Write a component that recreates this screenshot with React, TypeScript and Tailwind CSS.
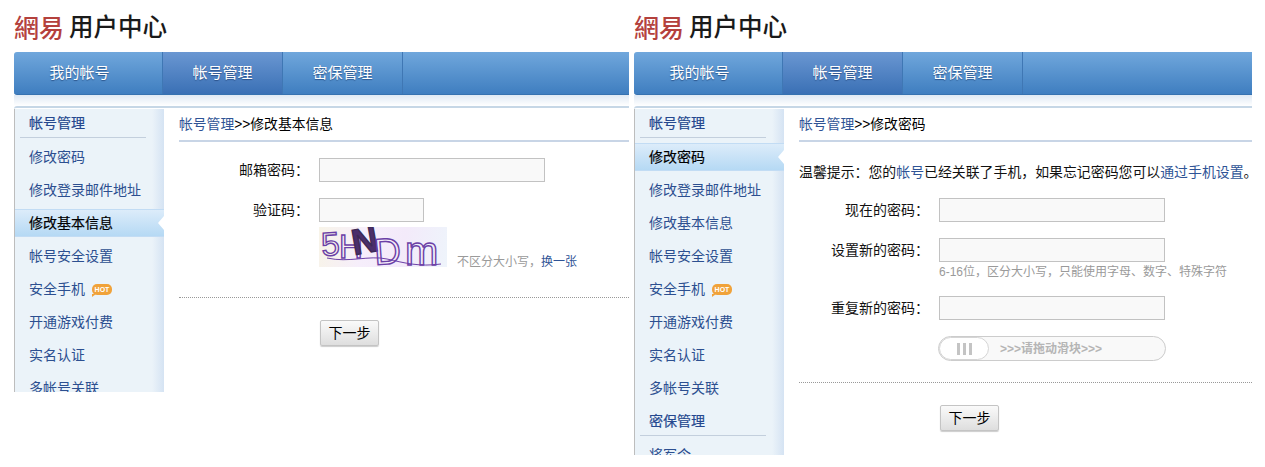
import React from "react";

const CJK = "font-['Liberation_Sans','Noto_Sans_CJK_SC',sans-serif]";

function Tab({ label, active, className }: { label: string; active?: boolean; className: string }) {
  return (
    <div
      className={`flex h-full items-center justify-center border-r border-[#3f77b4] text-[15px] text-white [text-shadow:0_1px_1px_rgba(20,50,100,0.6)] ${className} ${
        active ? "bg-[linear-gradient(#6a97d2,#3a70b5)]" : ""
      }`}
    >
      {label}
    </div>
  );
}

function SectionHead({ label, first }: { label: string; first?: boolean }) {
  return (
    <div
      className={`relative shrink-0 pl-[14px] text-[14px] leading-[20px] text-[#25488f] [-webkit-text-stroke:0.2px_#25488f] ${
        first ? "h-[32px] pt-[4px]" : "h-[34px] pt-[6px]"
      }`}
    >
      {label}
      <div className="absolute bottom-[3px] left-[5px] h-px w-[126px] bg-[#c3cfdd]" />
    </div>
  );
}

function NavItem({ label, active, hot }: { label: string; active?: boolean; hot?: boolean }) {
  return (
    <div className="h-[33px] shrink-0 pt-[2px]">
      <div
        className={`relative flex h-[28px] items-center pl-[14px] text-[14px] ${
          active
            ? "border-y border-[#c2dcf4] bg-[linear-gradient(#dcecfa,#b5d9f4)] text-black [-webkit-text-stroke:0.2px_#000]"
            : "text-[#2c4f90]"
        }`}
      >
        {label}
        {hot && (
          <span className="relative ml-[7px] flex h-[11px] w-[20px] items-center justify-center rounded-[5px] bg-[#f0a23a] text-[7px] font-bold leading-none text-white">
            HOT
            <span className="absolute -bottom-[2px] left-0 border-r-[4px] border-t-[3px] border-r-transparent border-t-[#f0a23a]" />
          </span>
        )}
        {active && (
          <span className="absolute right-0 top-1/2 -translate-y-1/2 border-y-[7px] border-r-[6px] border-y-transparent border-r-white" />
        )}
      </div>
    </div>
  );
}

function Sidebar({ current }: { current: string }) {
  const items = ["修改密码", "修改登录邮件地址", "修改基本信息", "帐号安全设置", "安全手机", "开通游戏付费", "实名认证", "多帐号关联"];
  return (
    <div className="flex w-[150px] shrink-0 flex-col border-l border-[#bdbdbd] bg-[linear-gradient(90deg,#ebf3f9_92%,#d5e3f3)]">
      <SectionHead label="帐号管理" first />
      {items.map((i) => (
        <NavItem key={i} label={i} active={i === current} hot={i === "安全手机"} />
      ))}
      <SectionHead label="密保管理" />
      <NavItem label="将军令" />
    </div>
  );
}

function Field({ label, width, className = "" }: { label: string; width: string; className?: string }) {
  return (
    <div className={`flex h-[24px] items-center ${className}`}>
      <div className="w-[130px] shrink-0 text-right text-[14px] text-[#111]">{label}</div>
      <div className={`ml-[10px] h-[24px] border border-[#c2c2c2] bg-[#f9f9f9] ${width}`} />
    </div>
  );
}

function NextButton() {
  return (
    <div className="ml-[141px] mt-[22px] flex h-[26px] w-[59px] items-center justify-center rounded-[2px] border border-[#c4c4c4] bg-[linear-gradient(#fafafa,#dedede)] text-[14px] text-black shadow-[0_1px_1px_rgba(0,0,0,0.2)]">
      下一步
    </div>
  );
}

function Captcha() {
  return (
    <div className="ml-[140px] mt-[5px] flex h-[40px] items-start">
      <svg width="128" height="40" viewBox="0 0 128 40" className="block shrink-0 bg-[linear-gradient(100deg,#f8f4e8,#f6eefb_35%,#f3eafa_65%,#eef4fb)]">
        <text
          x="3 20 35 56 86"
          y="29 31 28 38 38"
          rotate="-4 0 -10 -4 0"
          fontFamily="Liberation Sans"
          fontSize="33"
          fill="none"
          stroke="#6b3fa6"
          strokeWidth="1.4"
        >
          5H<tspan fill="#4b2f6b" stroke="#3d2a55" fontWeight="700" fontSize="36">N</tspan><tspan fontSize="37">D</tspan><tspan fontSize="40">m</tspan>
        </text>
        <path d="M8 31 C30 36 50 28 68 32 S100 40 122 37" fill="none" stroke="#6b3fa6" strokeWidth="1" />
      </svg>
      <span className="ml-[10px] mt-[26px] whitespace-nowrap text-[12px] leading-[18px] text-[#9a9a9a]">
        不区分大小写，<span className="text-[#2f5496]">换一张</span>
      </span>
    </div>
  );
}

function Panel({ height, width, current, crumb, children }: { height: string; width: string; current: string; crumb: string; children: React.ReactNode }) {
  return (
    <div className={`flex shrink-0 flex-col overflow-hidden ${height} ${width}`}>
      <div className="flex h-[52px] shrink-0 items-center pt-[1px]">
        <span className="font-['Noto_Sans_CJK_TC',sans-serif] text-[25px] font-medium leading-none text-[#b4413d]">網易</span>
        <span className="ml-[5px] font-['Noto_Sans_CJK_SC',sans-serif] text-[24.5px] font-medium leading-none text-[#1a1a1a]">用户中心</span>
      </div>
      <div className="flex h-[43px] shrink-0 overflow-hidden rounded-l-[3px] border-b border-[#3672b0] bg-[linear-gradient(#70a7dc,#3f7ec0)]">
        <Tab label="我的帐号" className="w-[149px] pr-[17px]" />
        <Tab label="帐号管理" active className="w-[120px]" />
        <Tab label="密保管理" className="w-[120px]" />
      </div>
      <div className="h-[11px] shrink-0 bg-[linear-gradient(#dfe9f4,#ffffff)]" />
      <div className="flex min-h-0 flex-1 rounded-tl-[3px] border-t-2 border-[#c6d7e6]">
        <div className="flex flex-col pt-px">
          <Sidebar current={current} />
        </div>
        <div className="min-w-0 flex-1 pl-[15px]">
          <div className="flex h-[34px] items-center border-b-2 border-[#c8d5e6] pt-[2px] text-[13.8px] text-black">
            <span className="text-[#2f5496]">帐号管理</span>&gt;&gt;{crumb}
          </div>
          {children}
        </div>
      </div>
    </div>
  );
}

export default function App() {
  return (
    <div className={`flex gap-[5px] bg-white pl-[14px] ${CJK}`}>
      <Panel height="h-[392px]" width="w-[615px]" current="修改基本信息" crumb="修改基本信息">
        <Field label="邮箱密码：" width="w-[226px]" className="mt-[16px]" />
        <Field label="验证码：" width="w-[105px]" className="mt-[16px]" />
        <Captcha />
        <div className="mt-[30px] border-t border-dotted border-[#999]" />
        <NextButton />
      </Panel>
      <Panel height="h-[455px]" width="w-[618px]" current="修改密码" crumb="修改密码">
        <div className="mt-[20px] whitespace-nowrap text-[13.9px] leading-[20px] text-[#111]">
          温馨提示：您的<span className="text-[#2f5496]">帐号</span>已经关联了手机，如果忘记密码您可以<span className="text-[#2f5496]">通过手机设置</span>。
        </div>
        <Field label="现在的密码：" width="w-[226px]" className="mt-[16px]" />
        <Field label="设置新的密码：" width="w-[226px]" className="mt-[16px]" />
        <div className="ml-[140px] h-[20px] text-[12px] leading-[20px] text-[#9a9a9a]">6-16位，区分大小写，只能使用字母、数字、特殊字符</div>
        <Field label="重复新的密码：" width="w-[226px]" className="mt-[14px]" />
        <div className="relative ml-[139px] mt-[16px] flex h-[25px] w-[228px] items-center rounded-full border border-[#cccccc] bg-[#f9f9f9]">
          <div className="flex h-[23px] w-[50px] items-center justify-center gap-[3px] rounded-full border border-[#d5d5d5] bg-white">
            <span className="h-[12px] w-[3px] bg-[#c4c4c4]" />
            <span className="h-[12px] w-[3px] bg-[#c4c4c4]" />
            <span className="h-[12px] w-[3px] bg-[#c4c4c4]" />
          </div>
          <span className="ml-[11px] text-[12px] font-bold text-[#b5b5b5]">&gt;&gt;&gt;请拖动滑块&gt;&gt;&gt;</span>
        </div>
        <div className="mt-[21px] border-t border-dotted border-[#999]" />
        <NextButton />
      </Panel>
    </div>
  );
}
